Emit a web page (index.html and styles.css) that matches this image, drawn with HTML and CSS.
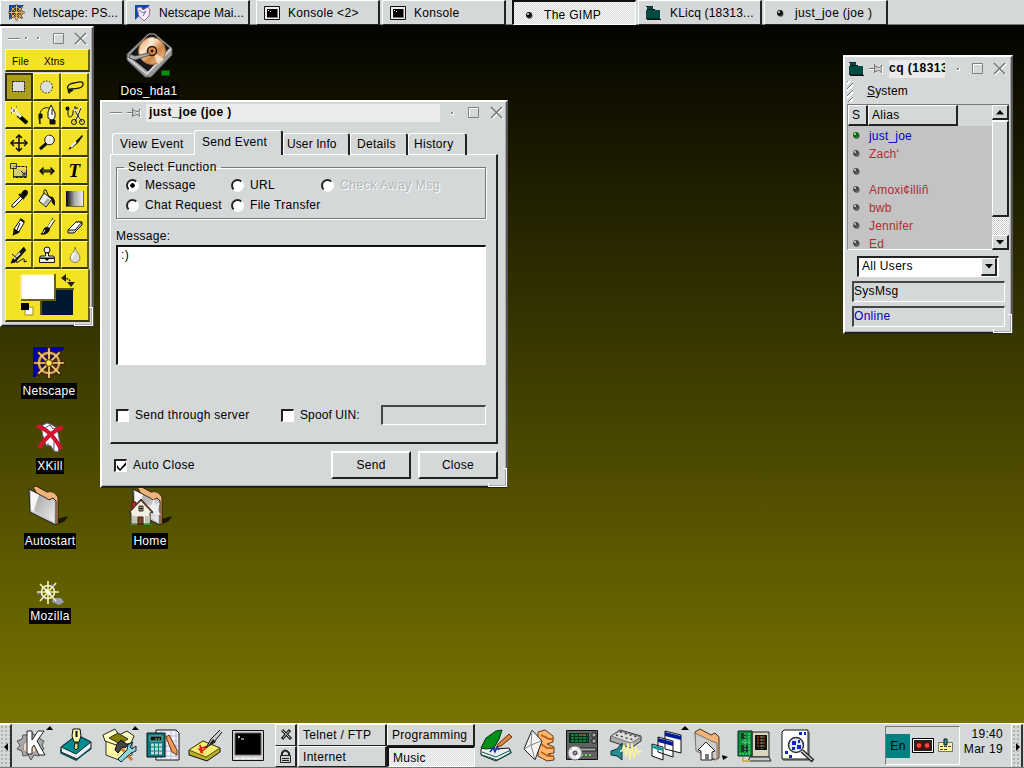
FILE: index.html
```html
<!DOCTYPE html>
<html lang="en">
<head>
<meta charset="utf-8">
<title>Desktop</title>
<link rel="stylesheet" href="styles.css">
</head>
<body>
<svg class="defs" width="0" height="0">
<defs>
<linearGradient id="metal" x1="0" y1="0" x2="1" y2="1"><stop offset="0" stop-color="#8d8d8d"/><stop offset="1" stop-color="#fff"/></linearGradient>
<linearGradient id="copper" x1="0" y1="0" x2="1" y2="1"><stop offset="0" stop-color="#d99a62"/><stop offset=".35" stop-color="#ffe3c4"/><stop offset=".6" stop-color="#c98548"/><stop offset="1" stop-color="#fbd3a8"/></linearGradient>
<linearGradient id="fade"><stop offset="0" stop-color="#000"/><stop offset=".5" stop-color="#aaa"/><stop offset="1" stop-color="#eee"/></linearGradient>
<symbol id="wheel" viewBox="0 0 32 32"><g fill="none"><path d="M16 1v30M1 16h30M5 5l22 22M27 5L5 27" stroke="#4a2008" stroke-width="3.4"/><circle cx="16" cy="16" r="9.5" stroke="#4a2008" stroke-width="4"/><circle cx="16" cy="16" r="9.5" stroke="#d9a868" stroke-width="2"/><path d="M16 2v28M2 16h28M6 6l20 20M26 6L6 26" stroke="#f2d67c" stroke-width="1.6"/></g><circle cx="16" cy="16" r="3" fill="#f8e850" stroke="#77400c"/></symbol>
<symbol id="pin" viewBox="0 0 16 10"><path d="M1 4.500h5" stroke="#777"/><path d="M1 5.500h5" stroke="#fff"/><path d="M6.500 0v9M7 2.500h2l1 1h2l2-2.500v8l-2-2.500h-2l-1 1H7" fill="#c4c4c4" stroke="#777"/><path d="M7.500 9h1M14.500 2v8M10 5h2" stroke="#fff"/></symbol>
<symbol id="max" viewBox="0 0 12 12"><path d="M1.5 1.5h9v9h-9z" fill="none" stroke="#fff"/><path d="M.5.5h10v10H.5z" fill="none" stroke="#808080"/></symbol>
<symbol id="close" viewBox="0 0 14 14"><path d="M2 2l11 11M13 2L2 13" stroke="#fff" stroke-width="1.3"/><path d="M1 1l11 11M12 1L1 12" stroke="#6b6b6b" stroke-width="1.2"/></symbol>
<symbol id="term" viewBox="0 0 16 14"><path d="M.5.5h15v13H.5z" fill="#eee" stroke="#111"/><path d="M3 3h10v8H3z" fill="#000"/><path d="M4 4.5h1M6 5.5h1" stroke="#fff"/><path d="M13.5 3v9M3 11.5h11" stroke="#777"/></symbol>
<symbol id="licq" viewBox="0 0 15 14"><path d="M1 0h6v3H1zM0 4h14v9H0z" fill="#004c42"/><path d="M0 .5h7M0 12.5h15" stroke="#04201d" stroke-dasharray="2 1"/><path d="M1 3.5h8M1 13.5h14" stroke="#111"/></symbol>
<symbol id="ball" viewBox="0 0 8 8"><circle cx="4" cy="4" r="3" fill="currentColor"/><circle cx="4.7" cy="5" r="2.5" fill="none" stroke="#222" stroke-width=".6"/><circle cx="3" cy="3" r="1" fill="#ddd"/></symbol>
<symbol id="folder" viewBox="0 0 44 42"><path d="M29 34l11-3-3 5-6 3z" fill="#000" opacity=".7"/><path d="M5 2l3-1 11 6q7-2 11 5v27l-2 1z" fill="#efb37a" stroke="#32200f"/><path d="M1 4l17 9 3 2 4-2 3 3v24L2 27z" fill="#ccc" stroke="#222"/><path d="M3 6l8 4-5 17-3-2z" fill="#f5f5f5"/><path d="M11 10l8 5 7 2v20l-20-12z" fill="url(#metal)" opacity=".65"/></symbol>
</defs>
</svg>

<header class="tasks">
  <div class="task"><svg width="17" height="17"><path d="M1 1h15L1 16z" fill="#0a4ab5"/><use href="#wheel" width="17" height="17"/></svg><span class="t1">Netscape: PS...</span></div>
  <div class="task"><svg width="17" height="17"><path d="M1 1h15L1 16z" fill="#0a4ab5"/><path d="M3 4l4-1 2 3 5-3 2 3-1 6-5 5-5-5z" fill="#f4eef8" stroke="#a36c8e"/><path d="M5 6l4 3 3-2-3 5" fill="none" stroke="#76689d"/></svg><span class="t2">Netscape Mai...</span></div>
  <div class="task first"><svg width="16" height="14"><use href="#term"/></svg><span class="t3">Konsole &lt;2&gt;</span></div>
  <div class="task"><svg width="16" height="14"><use href="#term"/></svg><span class="t4">Konsole</span></div>
  <div class="task first down"><svg class="dot" width="8" height="8"><use href="#ball"/></svg><span class="t5">The GIMP</span></div>
  <div class="task"><svg width="15" height="14"><use href="#licq"/></svg><span class="t6">KLicq (18313...</span></div>
  <div class="task"><svg class="dot" width="8" height="8"><use href="#ball"/></svg><span class="t7">just_joe (joe )</span></div>
</header>

<main class="desktop">
  <figure class="shortcut hda"><svg width="50" height="50" viewBox="0 0 50 50"><path d="M24 3h7l17 14v7L27 46h-6L3 29v-6z" fill="#999" stroke="#555"/><path d="M25 3h5l16 14-22 24L4 25z" fill="#171717" stroke="#aaa"/><path d="M4 27l19 16 24-25" fill="none" stroke="#ddd" stroke-width="1.500"/><circle cx="28" cy="20" r="13.500" fill="url(#copper)" stroke="#a76935"/><path d="M28 20l-4-13 6-1zM28 20l12 8-6 6z" fill="#fff0dd" opacity=".7"/><circle cx="28" cy="20" r="4.5" fill="#d28a4c" stroke="#20150c" stroke-width="1.5"/><circle cx="28" cy="20" r="1.5" fill="#26170c"/><path d="M6 23l5 2 14-3 1 2-15 5-6-2z" fill="#aaa" stroke="#444" stroke-width=".8"/></svg><i class="led"></i><figcaption>Dos_hda1</figcaption></figure>
  <figure class="shortcut netscape"><svg width="34" height="34"><path d="M1 1h31v2L3 31H1z" fill="#0000a8"/><use href="#wheel" width="34" height="34"/></svg><figcaption>Netscape</figcaption></figure>
  <figure class="shortcut xkill"><svg width="30" height="32" viewBox="0 0 30 32"><path d="M6 4l6-3 5 2 5 3 3 16-2 8-4-1-3-5-5-1-3-9z" fill="#fff" stroke="#66658d"/><path d="M7 3l3 3 5-3 3 4 4-1M13 21v4M19 19v10" stroke="#55547d" fill="none"/><path d="M2 4q14 4 24 23M28 5Q14 10 4 26" fill="none" stroke="#d01530" stroke-width="4"/></svg><figcaption>XKill</figcaption></figure>
  <figure class="shortcut auto"><svg width="44" height="42"><use href="#folder"/></svg><figcaption>Autostart</figcaption></figure>
  <figure class="shortcut home"><svg width="48" height="44"><g transform="translate(6 0)"><use href="#folder" width="44" height="42"/><path d="M15 26l-3-8 7 3 3-8 1 7 5-2-3 7 4 5-6-1z" fill="#eee"/></g><path d="M6 17h4v9H6z" fill="#b43b28" stroke="#511"/><path d="M4 27l11-13 12 13-3 1v11H5V28z" fill="#f2f0e2" stroke="#332414"/><path d="M2 28l13-13 12 13" fill="none" stroke="#5a3421" stroke-width="1.500"/><path d="M6 31h6v7H6zM19 31h5v7h-5z" fill="#c5c3b5"/><path d="M13 21h4v5h-4z" fill="#f0dc8c" stroke="#222"/><path d="M15 21v5M13 23.500h4" stroke="#222"/><path d="M12 32h5v7h-5z" fill="#824323" stroke="#352010"/><path d="M4 39.5h7M18 39.5h8" stroke="#438b2b"/></svg><figcaption>Home</figcaption></figure>
  <figure class="shortcut moz"><svg width="28" height="26" viewBox="0 0 28 26"><path d="M17 18h8l3 4-5 3-7-3z" fill="#9b9eb6"/><path d="M12 1v23M1 12h22M4 4l16 17M20 3L4 21" stroke="#f1efa0" stroke-width="1.7"/><circle cx="12" cy="12" r="6.5" fill="none" stroke="#f4f4d8" stroke-width="1.6"/><path d="M9 9l6 6" stroke="#fff" stroke-width="2"/><path d="M7 18l3 2m5-16l4 3M1 14h4" stroke="#706df0"/></svg><figcaption>Mozilla</figcaption></figure>

  <section class="window gimp">
    <div class="titlebar"><i class="min"></i><i class="speck"></i><i class="speck two"></i><svg width="12" height="12"><use href="#max"/></svg><svg class="x" width="14" height="14"><use href="#close"/></svg></div>
    <nav class="gmenu"><span>File</span><span>Xtns</span></nav>
    <div class="tools">
      <b class="sel"><svg viewBox="0 0 28 28"><path d="M7.500 8.500h12v10h-12z" fill="#ddd" stroke="#111" stroke-dasharray="2 1"/></svg></b>
      <b><svg viewBox="0 0 28 28"><circle cx="13.500" cy="14" r="6" fill="#ddd" stroke="#111" stroke-dasharray="1.500 1.500"/></svg></b>
      <b><svg viewBox="0 0 28 28"><path d="M9 20q-2 0-1-3c-4-3 1-7 5-7s8-3 9 0c1 5-6 6-12 6-4 0-3 4-1 3l3-2M8 17q2 1 3 0" fill="none" stroke="#111" stroke-width="1.300"/></svg></b>
      <b><svg viewBox="0 0 28 28"><path d="M13 14l9 8" stroke="#000" stroke-width="4"/><path d="M12 12l4 4" stroke="#eee" stroke-width="3"/><path d="M9 6v7M5.500 9.500h7M7 7l5 5M12 7l-5 5" stroke="#fff"/><path d="M9 8v3M6 7h1M11 6h1M6 12h1" stroke="#222"/></svg></b>
      <b><svg viewBox="0 0 28 28"><path d="M7 23v-9c0-7 7-9 11-6" fill="none" stroke="#111"/><path d="M6 13h3v4H6zM6 17l1 6" fill="#111" stroke="#111"/><path d="M18 4l-3 7v6l3 2h2l2-3v-4z" fill="#fff" stroke="#111"/><path d="M19 8v6M17 19h5v4h-5z" stroke="#111" fill="#111"/></svg></b>
      <b><svg viewBox="0 0 28 28"><circle cx="6.500" cy="7.500" r="2"/><path d="M7 8v5c0 5 5 3 5-1 0-5 2-5 5-5M14 5v4" fill="none" stroke="#111"/><path d="M13 8l8 13M20 6l-6 15" stroke="#fff" stroke-width="2"/><path d="M14 10l7 11M20 7l-6 14" stroke="#111"/><circle cx="13" cy="21" r="2.500" fill="none" stroke="#111"/><circle cx="21" cy="21" r="2.500" fill="none" stroke="#111"/></svg></b>
      <b><svg viewBox="0 0 28 28"><path d="M14 7v14M7 14h14M11 9l3-3 3 3M11 19l3 3 3-3M9 11l-3 3 3 3M19 11l3 3-3 3" fill="none" stroke="#111" stroke-width="1.500"/></svg></b>
      <b><svg viewBox="0 0 28 28"><path d="M14 14l-7 6" stroke="#111" stroke-width="3"/><circle cx="16.500" cy="11" r="4.800" fill="#eee" stroke="#111"/><path d="M14 9l2-2" stroke="#fff" stroke-width="2"/></svg></b>
      <b><svg viewBox="0 0 28 28"><path d="M21 6L9 18l-2 3 4-2 6-5 5-7z" fill="#111"/><path d="M10 18l5-5" stroke="#fff" stroke-width="2"/></svg></b>
      <b><svg viewBox="0 0 28 28"><path d="M8.500 9.500h13v11h-13z" fill="none" stroke="#111" stroke-dasharray="3 1"/><path d="M5.500 6.500h6v5h-6zM8.500 11.500v8h13v-7" fill="#bbb8" stroke="#333"/><path d="M16 14l4 4m0-3v3h-3" fill="none" stroke="#111"/></svg></b>
      <b><svg viewBox="0 0 28 28"><path d="M10.500 9.500L6 14l4.500 4.500v-3h7v3L22 14l-4.500-4.500v3h-7z" fill="#111"/><path d="M9 14h10" stroke="#776d10"/></svg></b>
      <b class="letter">T</b>
      <b><svg viewBox="0 0 28 28"><path d="M17 10L7 20v2h2l10-10" fill="#fff" stroke="#111"/><path d="M14 9l5 5M17 9q2-4 4-3t0 4l-2 2z" stroke="#111" stroke-width="2"/></svg></b>
      <b><svg viewBox="0 0 28 28"><path d="M11 8l8 6-6 8-7-6z" fill="#eee" stroke="#111"/><path d="M11 8q-1-4 2-3l3 7" fill="none" stroke="#111"/><path d="M15 11l5 1 2 4v5l-3-3-1-4z" fill="#111"/><path d="M11 20l5-6" stroke="#aaa" stroke-width="3"/></svg></b>
      <b><svg viewBox="0 0 28 28"><path d="M5 6h18v16H5z" fill="#776d19"/><path d="M5 6h17v15H5z" fill="url(#fade)"/></svg></b>
      <b><svg viewBox="0 0 28 28"><path d="M16 6l3 2v2l-6 10-4 1v-5z" fill="#fff" stroke="#111"/><path d="M15 6l4 3M9 21l1-4 3 2z" stroke="#111" stroke-width="2"/><path d="M15 10l-3 7" stroke="#111"/></svg></b>
      <b><svg viewBox="0 0 28 28"><path d="M20 5l-6 10M22 7l-6 9" stroke="#111"/><path d="M20 7l-5 8" stroke="#fff" stroke-width="2"/><path d="M15 14c-6-1-4 6-8 7 5 2 10-1 10-6z" fill="#111"/><path d="M12 17l-2 3" stroke="#fff"/></svg></b>
      <b><svg viewBox="0 0 28 28"><path d="M7 17l8-8h6v3l-8 8H7z" fill="#ccc" stroke="#111"/><path d="M7 17l8-8h6l-7 8z" fill="#fff" stroke="#111"/></svg></b>
      <b><svg viewBox="0 0 28 28"><path d="M19 6L8 18l-2 4 4-1L21 9" fill="#111" stroke="#111"/><path d="M9 18l6-6" stroke="#ddd" stroke-width="2"/><path d="M7 13l6 5M12 18q-2 5 1 3t5-3 1 3l3-1" fill="none" stroke="#111"/></svg></b>
      <b><svg viewBox="0 0 28 28"><circle cx="14" cy="9" r="3" fill="#eee" stroke="#111"/><path d="M12.500 12h3v3h5l1 2H6.500l1-2h5zM6.500 17.500h15v4h-15z" fill="#eee" stroke="#111"/><path d="M11 17h6l-3 3z"/></svg></b>
      <b><svg viewBox="0 0 28 28"><path d="M14 6c0 5-5 7-5 11 0 6 10 6 10 0 0-4-4-6-5-11z" fill="#ddd" stroke="#8b8540"/><path d="M13 12q-2 3-2 5" stroke="#fff" stroke-width="2" fill="none"/></svg></b>
    </div>
    <div class="colors"><svg width="83" height="50"><path d="M35 19h32v26H35z" fill="#001733"/><path d="M35 45V19h33" fill="none" stroke="#5c5508" stroke-width="2"/><path d="M16 5h33v25H16z" fill="#fff"/><path d="M15 30V5h34" fill="none" stroke="#ffffa0"/><path d="M49 4v26H15" fill="none" stroke="#6c640d" stroke-width="2"/><path d="M57 8q8 0 8 7" fill="none" stroke="#222" stroke-width="1.500" stroke-dasharray="2 1"/><path d="M60 4v8l-5-4zM61 12h8l-4 5z" fill="#222"/><path d="M19 37h8v8h-8z" fill="#fff" stroke="#9b9115"/><path d="M15 33h8v7h-8z"/></svg></div>
    <i class="grip"></i>
  </section>

  <section class="window chat">
    <div class="titlebar"><i class="min"></i><svg class="pin" width="16" height="10"><use href="#pin"/></svg><strong class="tt1">just_joe (joe )</strong><i class="speck"></i><svg width="12" height="12"><use href="#max"/></svg><svg class="x" width="14" height="14"><use href="#close"/></svg></div>
    <nav class="tabs"><span class="v">View Event</span><span class="s active">Send Event</span><span class="u">User Info</span><span class="d">Details</span><span class="h">History</span></nav>
    <div class="pane">
      <fieldset><legend>Select Function</legend>
        <div class="radios"><label><i class="radio on"></i><span>Message</span></label><label><i class="radio"></i><span>URL</span></label><label class="off"><i class="radio"></i><span>Check Away Msg</span></label><label><i class="radio"></i><span>Chat Request</span></label><label><i class="radio"></i><span>File Transfer</span></label></div>
      </fieldset>
      <div class="msglabel">Message:</div>
      <div class="editor">:)</div>
      <div class="options"><i class="box"></i><span class="through">Send through server</span><i class="box"></i><span class="spoof">Spoof UIN:</span><i class="field"></i></div>
    </div>
    <div class="actions"><i class="box"><svg width="11" height="10"><path d="M1 4l3 4 6-7v3l-6 6-3-3z"/></svg></i><span class="ac">Auto Close</span><button>Send</button><button>Close</button></div>
    <i class="grip"></i>
  </section>

  <section class="window licq">
    <div class="titlebar"><svg class="app" width="15" height="14"><use href="#licq"/></svg><svg class="pin" width="16" height="10"><use href="#pin"/></svg><strong>cq (18313</strong><i class="speck"></i><svg width="12" height="12"><use href="#max"/></svg><svg class="x" width="14" height="14"><use href="#close"/></svg></div>
    <nav class="lmenu"><i></i><span><u>S</u>ystem</span></nav>
    <div class="list">
      <div class="contacts">
        <div class="head"><span>S</span><span>Alias</span></div>
        <p class="on"><svg width="8" height="8"><use href="#ball"/></svg>just_joe</p>
        <p><svg width="8" height="8"><use href="#ball"/></svg>Zach‘</p>
        <p><svg width="8" height="8"><use href="#ball"/></svg></p>
        <p><svg width="8" height="8"><use href="#ball"/></svg>Amoxi¢illiñ</p>
        <p><svg width="8" height="8"><use href="#ball"/></svg>bwb</p>
        <p><svg width="8" height="8"><use href="#ball"/></svg>Jennifer</p>
        <p><svg width="8" height="8"><use href="#ball"/></svg>Ed</p>
      </div>
      <div class="scroll"><i class="btn"><svg width="8" height="5"><path d="M0 4.500L4 0l4 4.500z"/></svg></i><i class="thumb"></i><i class="trough"></i><i class="btn"><svg width="8" height="5"><path d="M0 0h8L4 4.500z"/></svg></i></div>
    </div>
    <div class="combo"><span>All Users</span><i><svg width="8" height="5"><path d="M0 0h8L4 4.500z"/></svg></i></div>
    <div class="status">SysMsg</div>
    <div class="status blue">Online</div>
    <i class="grip"></i>
  </section>
</main>

<footer class="panel">
  <i class="handle"><svg width="11" height="42"><path d="M8 18v8l-4-4z"/></svg></i>
  <div class="launch left">
    <svg viewBox="0 0 36 36"><path d="M14 7l3-4 3 4 5-1 1 5 4 2-2 4 2 4-4 2-1 5-5-1-3 5-3-5-5 1-1-5-5-2 3-4-3-4 5-2 1-4z" fill="#aaa" stroke="#555" transform="translate(-1 1)"/><circle cx="15" cy="20" r="7" fill="#ead7bd" stroke="#8b8b8b"/><path d="M12 4h5v9l6-9h6l-7 10 8 14h-6l-5-10-2 3v6h-5z" fill="#fff" stroke="#222"/><path d="M31 3h7l-3-4z"/></svg>
    <svg viewBox="0 0 36 36"><path d="M3 20l16-12 14 7v7L19 32 3 25z" fill="#eee" stroke="#111"/><path d="M3 20l16-12 14 7-15 12z" fill="#008b91" stroke="#033"/><path d="M3 22v4l15 7 15-12" fill="none" stroke="#004f55" stroke-width="1.500"/><path d="M15 2h7l1 7-2 6h-5l-2-6z" fill="#f8f7a5" stroke="#111"/><path d="M18.500 4v6" stroke="#111" stroke-width="2"/><path d="M17 16h3v5l-2 2-2-2z" fill="#e0d77a" stroke="#111"/></svg>
    <svg viewBox="0 0 36 36"><path d="M5 14l14-5 12 6v13l-13 5-13-5z" fill="#fff8a7" stroke="#333"/><path d="M4 14L2 8l12-6 4 6 8-4 7 5-3 7-12 3z" fill="#fffdbd" stroke="#222"/><path d="M8 11l9-5 10 6-8 5z" fill="#847e00" stroke="#333"/><path d="M17 19v13" stroke="#ccc680"/><path d="M16 17l4-4 7 5-3 3-2-1-5 6-3-3z" fill="#444" stroke="#111"/><path d="M21 22l10 11" stroke="#d77d38" stroke-width="3"/><path d="M32 15l-5 3-1 5-9 9 3 3 10-9 5-2v-5l-4 3-2-2z" fill="#8dd7d6" stroke="#124"/><path d="M31 3h7l-4-4z"/></svg>
    <svg viewBox="0 0 36 36"><path d="M12 3h20l3 3v27H12z" fill="#f4f4ff" stroke="#111"/><path d="M13 9h21M13 14h21M13 19h21M13 24h21M13 29h21M17 4v28M22 4v28M27 4v28M32 4v28" stroke="#aaaacd" stroke-width=".8"/><path d="M3 6h18v24H3z" fill="#08797d" stroke="#111"/><path d="M6 9h12v5H6z" fill="#111" stroke="#75bfbe"/><path d="M11 12h5" stroke="#66e878" stroke-dasharray="2 1"/><path d="M7 18h11M7 22h11M7 26h11" stroke="#c6dadb" stroke-width="3" stroke-dasharray="3 1"/><path d="M22 10l3-2 8 15v5l-5-3z" fill="#ef9956" stroke="#672d10"/></svg>
    <svg viewBox="0 0 36 36"><path d="M2 23l14-9 17 7v4L20 34 2 28z" fill="#b6ae26" stroke="#111"/><path d="M2 23l14-9 17 7-14 9z" fill="#f5ec75" stroke="#555000"/><path d="M13 18l2 7-3-3 9-3-7 6z" stroke="#d81f12" stroke-width="1.500" fill="none"/><path d="M33 3l-9 9-5 9 8-6 8-10" fill="#ccc" stroke="#111"/><path d="M26 12l3 3-5 3-3 1z" fill="#222"/></svg>
    <svg viewBox="0 0 36 36"><path d="M2.500 3.500h31v30h-31z" fill="#d5d5d5" stroke="#111"/><path d="M5 6h26v22H5z"/><path d="M5 6h26v22H5z" fill="none" stroke="#666"/><path d="M8 9l2 1-2 1M11 12h3" fill="none" stroke="#fff"/><path d="M5 31.500h25" stroke="#fff" stroke-dasharray="4 2"/></svg>
  </div>
  <div class="minis"><i><svg width="14" height="14"><path d="M3 2l9 9M11 2L3 11" stroke="#222" stroke-width="3"/><path d="M3 2l8 8M10 3l-6 7" stroke="#bbb"/></svg></i><i><svg width="13" height="15"><path d="M3 7V4q3-5 7 0v3" fill="none" stroke="#222" stroke-width="2"/><path d="M1.500 6.500h10v7h-10z" fill="#ccc" stroke="#222"/><path d="M3 9.500h7M3 11.500h7" stroke="#222"/></svg></i></div>
  <div class="desks"><span class="tel">Telnet / FTP</span><span class="pro">Programming</span><span class="int">Internet</span><span class="mus down">Music</span></div>
  <div class="launch right">
    <svg viewBox="0 0 36 36"><path d="M3 22l5-3 9 3 14-1 2 5-15 8-15-6z" fill="#eee" stroke="#111"/><path d="M3 21L8 11 18 4l6-1-3 9-5 9-8 1z" fill="#079018" stroke="#031"/><path d="M4 25l14 5 15-7M4 28l15 5 15-8" fill="none" stroke="#055b56"/><path d="M12 25l3-4 2 4 2-5 2 3" fill="none" stroke="#1731a6" stroke-width="1.500"/><path d="M31 7L20 17l-1 3 4-1 11-9z" fill="#db8642" stroke="#63320c"/></svg>
    <svg viewBox="0 0 36 36"><path d="M17 5l7-2 8 6v6l-6 2 7 3v6l-6 1 6 3v3l-7 1-9-5z" fill="#ffb56b" stroke="#663613"/><path d="M20 8l8 4h5M20 17l6 4h7M20 25l7 4h6" stroke="#ba6523" fill="none" stroke-width="2"/><path d="M11 3l10 11-7 19L3 22z" fill="#f4f4f4" stroke="#222"/><path d="M11 3l-1 15 10-4M10 18l4 15M10 18l-7 4" fill="none" stroke="#888"/></svg>
    <svg viewBox="0 0 36 36"><path d="M2.500 3.500h31v29h-31z" fill="#626262" stroke="#111"/><path d="M5 6h20v10H5z" fill="#012d1b"/><path d="M7 8h17M7 11h17M7 14h17" stroke="#24d064" stroke-dasharray="3 1"/><path d="M15 8h7" stroke="#ec3932"/><path d="M28 6h4v4h-4zM28 12h4v4h-4zM15 21h17v3H15z" fill="#aaa" stroke="#222"/><path d="M17 28h12" stroke="#73d75e" stroke-width="2" stroke-dasharray="2 2"/><circle cx="11" cy="26" r="7" fill="#e7e7ed" stroke="#777"/><path d="M11 26l-3-6h4zM11 26l5 4-3 2z" fill="#fff"/><circle cx="11" cy="26" r="2" fill="#999" stroke="#333"/></svg>
    <svg viewBox="0 0 36 36"><path d="M4 9l9-6 21 6v5L24 21 3 14z" fill="#aaa" stroke="#333"/><path d="M4 9l9-5 21 6-10 6z" fill="#ddd" stroke="#777"/><path d="M9 8l18 5M13 5l17 5" stroke="#444" stroke-width="1.500" stroke-dasharray="2 3"/><path d="M4 24l6-2 5-6v17l-5-4-6-1z" fill="#288991" stroke="#0c3940"/><path d="M13 24h2l2-6 2 12 2-14 2 17 2-17 2 16 2-12 2 8 1-4h3" fill="none" stroke="#f8f3a1" stroke-width="1.500"/></svg>
    <svg viewBox="0 0 36 36"><path d="M15 4l16 4v18l-16-4zM8 10l15 4v16L8 25zM2 17l11 3v13L2 29z" fill="#fff" stroke="#111"/><path d="M15 5l16 4v4l-16-4zM8 11l15 4v4L8 15z" fill="#001a99"/><path d="M2 18l11 3v3L2 21z" fill="#08999b"/><path d="M31 3h8l-4-4z"/></svg>
    <svg viewBox="0 0 36 36"><path d="M29 28l6 2-5 3z"/><path d="M2 5l5-3 11 6 4-2 4 4v21l-5 2L4 24z" fill="#efb37a" stroke="#4a3018"/><path d="M2 6l16 8 6 2v17L3 24z" fill="#ccc" stroke="#777"/><path d="M5 23l8-8 9 9-3 1v8H8v-9z" fill="#fff" stroke="#222"/><path d="M12 27h4v6h-4z" fill="#777"/></svg>
    <svg viewBox="0 0 36 36"><path d="M16 5h17v25H16z" fill="#d8d7bd" stroke="#222"/><path d="M19 8h12v15H19z" fill="#111"/><path d="M21 10h9M21 13h9M21 16h9M21 19h9" stroke="#d75337" stroke-dasharray="2 1"/><path d="M26 9v13" stroke="#58cd60" stroke-dasharray="2 1"/><path d="M2 4h14v25H2z" fill="#079537" stroke="#022"/><path d="M5 6h5v6H5zM5 18h7v7H5z" fill="#123c25"/><path d="M13 6v20M6 15h8M3 27h12M9 6v19" stroke="#87db9d" stroke-dasharray="2 1"/><path d="M14 30h19l2 4H12z" fill="#ccc" stroke="#222"/><path d="M7 30v4h7" stroke="#c7b25a" stroke-width="2" fill="none"/></svg>
    <svg viewBox="0 0 36 36"><path d="M5 3h24v29H3V5z" fill="#fff" stroke="#111"/><path d="M4 33h26V5" fill="none" stroke="#333"/><path d="M20 5h3v3h-3zM25 5h2v3h-2zM6 24h3v3H6zM10 28h3v3h-3z" fill="#1026c7"/><circle cx="17" cy="18" r="7.500" fill="#dfeaff" stroke="#333" stroke-width="1.500"/><path d="M13 14h4v4h-4zM18 18h4v4h-4zM19 13h2v3h-2zM13 20h3v3h-3z" fill="#1026c7"/><path d="M23 24l11 10" stroke="#222" stroke-width="4"/><path d="M23 24l10 9" stroke="#ccc" stroke-width="1.500"/></svg>
  </div>
  <div class="tray"><b>En</b><svg width="22" height="15"><path d="M1.500 1.500h19v12h-19z" fill="#222" stroke="#fff"/><path d="M.5.500h21v14H.5z" fill="none" stroke="#000"/><path d="M4 4h6v7H4zM12 4h6v7h-6z" fill="#6e0907"/><circle cx="7" cy="7.500" r="2.300" fill="#ef4d42"/><circle cx="15" cy="7.500" r="2.300" fill="#ef4d42"/></svg><svg class="clip" width="17" height="16"><path d="M1.500 4.500h14v9h-14z" fill="#faf5a0" stroke="#777"/><path d="M3 8.500h11M3 11.500h8" stroke="#49451e" stroke-dasharray="3 1"/><path d="M7 1h3v6H7z" fill="#309b9d" stroke="#111"/></svg></div>
  <time><span>19:40</span><span>Mar 19</span></time>
  <i class="handle end"><svg width="11" height="42"><path d="M4 18v8l4-4z"/></svg></i>
</footer>
</body>
</html>
```
FILE: styles.css
```css
* { box-sizing: border-box; }
body { margin: 0; width: 1024px; height: 768px; overflow: hidden; display: flex; flex-direction: column; font: 12px/16px "Liberation Sans", Arial, sans-serif; letter-spacing: .3px; color: #000; background: linear-gradient(#000, #7f7b00); }
svg { display: block; flex: none; }
i, b { display: block; flex: none; font-style: normal; }
p, figure { margin: 0; }
.defs { position: absolute; }

.tasks { height: 25px; flex: none; display: flex; gap: 2px; background: #d4d8d9; border-bottom: 1px solid #777; }
.task { width: 124px; height: 25px; flex: none; display: flex; align-items: center; gap: 8px; padding-left: 7px; border: 1px solid #fff; border-right: 2px solid #222; border-bottom: 1px solid #222; white-space: nowrap; background: #d4d8d9; }
.task.first { margin-left: 4px; }
.task .dot { margin: 0 3px 0 4px; color: #111; }
.task .t1, .task .t2 { letter-spacing: .1px; }
.task .t6 { margin-left: 1px; letter-spacing: .2px; }
.task .t7 { letter-spacing: .35px; }
.down { border: 1px solid #fff; border-top: 2px solid #111; border-left: 2px solid #111; background: repeating-conic-gradient(#dadddd 0 25%, #f6f6f6 0 50%) 0 0 / 2px 2px; }
.task.down { border: 1px solid #fff; border-top: 2px solid #111; border-left: 2px solid #111; background: repeating-conic-gradient(#dadddd 0 25%, #f6f6f6 0 50%) 0 0 / 2px 2px; padding-top: 3px; }

.desktop { flex: 1; }
.shortcut { position: absolute; width: 100px; display: flex; flex-direction: column; align-items: center; }
.shortcut svg { margin-bottom: auto; }
.shortcut figcaption { background: #000; color: #fff; height: 16px; padding: 0 1px; }
.hda { left: 99px; top: 31px; height: 68px; }
.hda .led { position: absolute; left: 62px; top: 39px; width: 9px; height: 6px; background: #0a8f0a; border: 1px solid #055405; }
.netscape { left: -1px; top: 346px; height: 53px; }
.xkill { left: 0; top: 422px; height: 52px; }
.auto { left: 0; top: 485px; height: 64px; }
.home { left: 100px; top: 485px; height: 64px; }
.moz { left: 0; top: 580px; height: 44px; }

.window { position: absolute; background: #d4d8d9; border: 2px solid #fff; border-right: 2px solid #555; border-bottom: 2px solid #222; box-shadow: inset -1px -1px #aaa; }
.titlebar { display: flex; align-items: center; height: 20px; }
.min { width: 12px; height: 2px; background: #808080; border-bottom: 1px solid #fff; }
.speck { width: 3px; height: 3px; background: #888; border-right: 1px solid #fff; border-bottom: 1px solid #fff; }
.grip { position: absolute; right: -1px; bottom: -1px; width: 19px; height: 19px; border-right: 1px solid #fff; border-bottom: 1px solid #fff; pointer-events: none; }
.grip::before { content: ""; position: absolute; right: -1px; top: 0; width: 4px; height: 1px; background: #fff; }
.grip::after { content: ""; position: absolute; left: 0; bottom: -1px; width: 1px; height: 4px; background: #fff; }

.gimp { left: 0; top: 26px; width: 94px; height: 301px; padding: 0 3px; }
.gimp .titlebar { height: 21px; padding-left: 3px; }
.gimp .speck { margin-left: 5px; }
.gimp .speck.two { margin: 0 13px 0 9px; }
.gimp .x { margin-left: 9px; }
.gmenu, .colors, .tools b { background: #f3e225; border: 1px solid #ffff80; border-right: 2px solid #665e0b; border-bottom: 2px solid #3b3605; }
.gmenu { width: 85px; height: 23px; display: flex; gap: 15px; padding: 3px 6px; font-size: 10px; line-height: 17px; letter-spacing: .2px; }
.tools { margin-top: 1px; width: 84px; display: grid; grid-template-columns: repeat(3, 28px); grid-auto-rows: 28px; }
.tools b { overflow: hidden; }
.tools svg { width: 28px; height: 28px; margin: -1px; }
.tools .sel { background: #aca018; border: 2px solid #332e05; }
.tools .sel svg { margin: -2px; }
.tools .letter { font: italic bold 19px/25px "Liberation Serif", serif; text-align: center; }
.colors { width: 85px; height: 53px; overflow: hidden; }

.chat { left: 100px; top: 100px; width: 408px; height: 388px; padding: 1px 8px 0; }
.chat .titlebar { height: 20px; margin-right: -8px; }
.chat .pin { margin: 0 4px 0 4px; }
.titlebar strong { flex: none; height: 18px; background: #ebebeb; line-height: 17px; }
.chat strong { width: 294px; padding-left: 3px; letter-spacing: .35px; }
.chat .speck { margin: 0 14px 0 11px; }
.chat .x { margin-left: 10px; }
.tabs { display: flex; height: 32px; align-items: flex-end; padding-left: 2px; margin-bottom: -1px; }
.tabs span { height: 22px; padding: 2px 0 0 7px; border: 1px solid #fff; border-right: 2px solid #222; border-bottom: 0; border-radius: 3px 3px 0 0; white-space: nowrap; letter-spacing: .3px; }
.tabs .v { width: 82px; border-right: 0; letter-spacing: .4px; }
.tabs .s { width: 89px; height: 25px; background: #d4d8d9; padding: 3px 0 2px 7px; position: relative; }
.tabs .u { width: 67px; padding-left: 3px; letter-spacing: .1px; }
.tabs .d { width: 58px; padding-left: 6px; }
.tabs .h { width: 59px; padding-left: 5px; }
.pane { height: 290px; border: 1px solid #fff; border-right: 2px solid #222; border-bottom: 2px solid #222; padding: 4px 10px 0 5px; width: 388px; }
fieldset { margin: 0; height: 60px; min-width: 0; border: 1px solid #777; box-shadow: 1px 1px #fff, inset 1px 1px #fff; padding: 0 9px; }
legend { padding: 0 4px; margin-left: -2px; letter-spacing: .4px; }
.radios { display: grid; grid-template-columns: 105px 90px 1fr; grid-auto-rows: 20px; letter-spacing: .3px; }
.radios label { display: flex; align-items: center; gap: 6px; white-space: nowrap; }
.radio { width: 13px; height: 13px; border: 2px solid #222; border-right-color: #fff; border-bottom-color: #fff; border-radius: 50%; background: #fff; }
.radio.on { background: radial-gradient(circle, #000 2px, #fff 2.500px); }
.off { color: #b2b5b6; text-shadow: 1px 1px #fff; letter-spacing: .6px; }
.msglabel { margin-top: 9px; height: 17px; }
.editor { width: 370px; height: 120px; background: #fff; border: 1px solid #fff; border-left: 2px solid #111; border-top: 2px solid #111; padding: 0 3px; }
.options { display: flex; align-items: center; margin-top: 40px; height: 20px; }
.box { width: 13px; height: 13px; background: #fff; border: 2px solid #222; border-right: 1px solid #fff; border-bottom: 1px solid #fff; }
.through { width: 146px; margin-left: 6px; }
.spoof { width: 81px; margin-left: 6px; letter-spacing: .1px; }
.spoof + .field { width: 105px; height: 20px; border: 1px solid #fff; border-top: 2px solid #444; border-left: 2px solid #444; }
.actions { display: flex; align-items: center; padding: 7px 0 0 4px; }
.ac { width: 198px; margin-left: 6px; }
button { width: 80px; height: 28px; margin: 0 7px 0 0; padding: 0; background: #d4d8d9; border: 2px solid #fff; border-right-color: #222; border-bottom-color: #222; font: inherit; letter-spacing: .3px; }
.actions button:last-child { margin-right: 0; }

.licq { left: 843px; top: 55px; width: 170px; height: 279px; padding: 2px 2px 0; }
.licq .titlebar { padding-left: 2px; }
.licq .pin { margin: 0 5px 0 4px; }
.licq strong { width: 56px; overflow: hidden; white-space: nowrap; letter-spacing: .5px; }
.licq .speck { margin: 0 12px 0 12px; }
.licq .x { margin-left: 9px; }
.lmenu { display: flex; height: 24px; align-items: center; gap: 14px; margin-bottom: 1px; letter-spacing: .15px; }
.lmenu i { width: 6px; height: 21px; background: repeating-linear-gradient(135deg, #777 0 1px, #fff 1px 3px, #d4d8d9 3px 5px); }
.list { display: flex; height: 146px; border-top: 1px solid #777; }
.contacts { width: 145px; height: 145px; overflow: hidden; background: #c3c3c3; border-left: 1px solid #888; border-bottom: 1px solid #fff; }
.head { display: flex; height: 21px; background: #d4d8d9; }
.head span { width: 20px; padding: 1px 0 0 3px; border: 1px solid #fff; border-right: 2px solid #222; border-bottom: 2px solid #222; line-height: 17px; }
.head span + span { width: 90px; }
.contacts p { height: 18px; line-height: 20px; display: flex; gap: 9px; padding-left: 4px; color: #ac2f34; letter-spacing: .2px; }
.contacts svg { margin-top: 5px; color: #555; }
.contacts .on { color: #0000cf; }
.contacts .on svg { color: #087708; }
.scroll { width: 17px; height: 145px; display: flex; flex-direction: column; background: repeating-conic-gradient(#ccc 0 25%, #fff 0 50%) 0 0 / 2px 2px; }
.btn, .thumb, .combo i { background: #d4d8d9; border: 1px solid #fff; border-right: 2px solid #222; border-bottom: 2px solid #222; }
.btn { height: 15px; display: grid; place-items: center; }
.thumb { height: 97px; border-top-width: 2px; }
.trough { height: 18px; }
.combo { display: flex; width: 142px; height: 21px; margin: 6px 0 0 10px; background: #fff; border: 1px solid #fff; border-top: 2px solid #222; border-left: 2px solid #222; }
.combo span { width: 122px; padding-left: 3px; line-height: 17px; }
.combo i { width: 16px; display: grid; place-items: center; }
.status { width: 153px; height: 21px; margin: 4px 0 0 5px; border: 1px solid #fff; border-top: 2px solid #444; border-left: 2px solid #444; line-height: 17px; }
.blue { color: #0000cf; }

.panel { height: 45px; flex: none; display: flex; background: #d4d8d9; border-top: 1px solid #fff; border-bottom: 1px solid #777; }
.handle { width: 12px; height: 43px; border-right: 2px solid #333; border-top: 1px solid #fff; background: radial-gradient(circle, #999 .6px, transparent .9px) 0 0 / 4px 4px; }
.launch { display: flex; gap: 7px; padding-top: 3px; }
.launch svg { width: 36px; height: 36px; overflow: visible; }
.left { width: 263px; padding-left: 3px; }
.right { width: 410px; padding-left: 3px; gap: 7px; }
.minis { width: 22px; display: grid; grid-template-rows: 22px 21px; }
.minis i { display: grid; place-items: center; }
.minis i, .desks span:not(.down) { border: 1px solid #fff; border-right: 2px solid #222; border-bottom: 1px solid #222; }
.desks { width: 178px; padding-left: 1px; display: grid; grid-template: 22px 21px / 89px 88px; }
.desks span { padding-left: 4px; line-height: 20px; letter-spacing: .3px; }
.tray { width: 75px; height: 39px; margin-top: 2px; display: flex; align-items: center; gap: 2px; border: 1px solid #777; border-right-color: #fff; border-bottom-color: #fff; }
.tray b { width: 24px; height: 24px; background: #008080; font-weight: normal; text-align: center; line-height: 25px; }
.tray .clip { margin-left: 1px; }
time { width: 51px; display: flex; flex-direction: column; align-items: flex-end; padding: 3px 8px 0 0; white-space: nowrap; line-height: 15px; letter-spacing: .3px; }
.end { width: 12px; border-left: 1px solid #fff; }
```
